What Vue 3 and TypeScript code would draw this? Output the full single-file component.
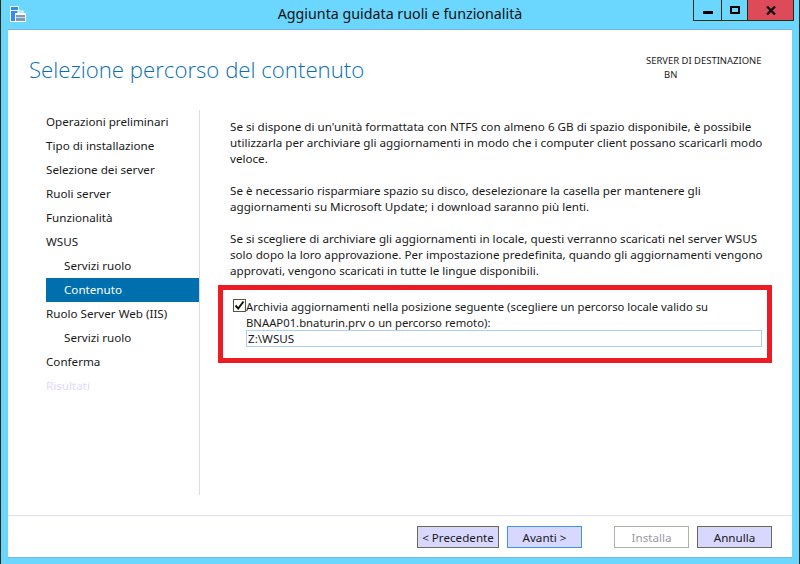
<script setup lang="ts">
interface NavItem { label: string; sub?: boolean; active?: boolean; disabled?: boolean }
const items: NavItem[] = [
  { label: 'Operazioni preliminari' },
  { label: 'Tipo di installazione' },
  { label: 'Selezione dei server' },
  { label: 'Ruoli server' },
  { label: 'Funzionalità' },
  { label: 'WSUS' },
  { label: 'Servizi ruolo', sub: true },
  { label: 'Contenuto', sub: true, active: true },
  { label: 'Ruolo Server Web (IIS)' },
  { label: 'Servizi ruolo', sub: true },
  { label: 'Conferma' },
  { label: 'Risultati', disabled: true },
]
</script>

<template>
  <div class="win">
    <header class="titlebar">
      <svg class="appicon" width="16" height="16" viewBox="0 0 16 16">
        <rect x="0" y="0" width="9" height="16" fill="#fff" />
        <rect x="1" y="1" width="7" height="3" fill="#2e8bff" />
        <rect x="1" y="5" width="7" height="10" fill="#2e8bff" />
        <rect x="5" y="7" width="11" height="9" fill="#fff" />
        <rect x="6" y="9" width="9" height="6" fill="#7d9bb5" />
        <rect x="6" y="11" width="9" height="1" fill="#fff" opacity="0.6" />
        <rect x="8" y="5" width="5" height="2" fill="#6bd7ff" stroke="#fff" stroke-width="1" />
      </svg>
      <div class="title">Aggiunta guidata ruoli e funzionalità</div>
      <div class="controls">
        <div class="ctl min"><span></span></div>
        <div class="ctl max"><span></span></div>
        <div class="ctl close">
          <svg width="10" height="9" viewBox="0 0 10 9"><path d="M1 0.5 L9 8.5 M9 0.5 L1 8.5" stroke="#111" stroke-width="2.4" fill="none" /></svg>
        </div>
      </div>
    </header>
    <div class="client">
      <div class="head">
        <h1>Selezione percorso del contenuto</h1>
        <div class="dest">
          <div>SERVER DI DESTINAZIONE</div>
          <div class="bn">BN</div>
        </div>
      </div>
      <div class="main">
        <nav class="nav">
          <div
            v-for="(it, i) in items"
            :key="i"
            class="item"
            :class="{ sub: it.sub, active: it.active, disabled: it.disabled }"
          >{{ it.label }}</div>
        </nav>
        <section class="content">
          <p>Se si dispone di un'unità formattata con NTFS con almeno 6 GB di spazio disponibile, è possibile utilizzarla per archiviare gli aggiornamenti in modo che i computer client possano scaricarli modo veloce.</p>
          <p>Se è necessario risparmiare spazio su disco, deselezionare la casella per mantenere gli aggiornamenti su Microsoft Update; i download saranno più lenti.</p>
          <p>Se si scegliere di archiviare gli aggiornamenti in locale, questi verranno scaricati nel server WSUS solo dopo la loro approvazione. Per impostazione predefinita, quando gli aggiornamenti vengono approvati, vengono scaricati in tutte le lingue disponibili.</p>
          <div class="redbox">
            <div class="check">
              <span class="cb">
                <svg width="11" height="11" viewBox="0 0 11 11"><path d="M1.5 5.5 L4.2 8.5 L9.5 1.5" stroke="#111" stroke-width="1.9" fill="none" /></svg>
              </span>
              <span class="cbtext">Archivia aggiornamenti nella posizione seguente (scegliere un percorso locale valido su BNAAP01.bnaturin.prv o un percorso remoto):</span>
            </div>
            <div class="input">Z:\WSUS</div>
          </div>
        </section>
      </div>
      <footer class="footer">
        <div class="btn b1">&lt; Precedente</div>
        <div class="btn b2 focus">Avanti &gt;</div>
        <div class="btn b3 off">Installa</div>
        <div class="btn b4">Annulla</div>
      </footer>
    </div>
  </div>
</template>

<style>
html, body { margin: 0; padding: 0; background: #6bd7ff; }
</style>

<style scoped>
.win {
  width: 800px;
  height: 564px;
  box-sizing: border-box;
  background: #6bd7ff;
  border-left: 1px solid #2b2b1a;
  border-right: 1px solid #2b2b1a;
  display: flex;
  flex-direction: column;
  font-family: "Noto Sans", "Open Sans", sans-serif;
  font-size: 11.65px;
  line-height: 16px;
  color: #1a1a1a;
  overflow: hidden;
}
.titlebar {
  height: 29px;
  flex: none;
  display: flex;
  align-items: flex-start;
  position: relative;
}
.appicon { margin: 6px 0 0 9px; flex: none; }
.title {
  position: absolute;
  left: 0;
  right: 0;
  top: 4px;
  text-align: center;
  font-size: 14.25px;
  line-height: 20px;
  color: #111;
}
.controls {
  position: absolute;
  top: 0;
  left: 692px;
  display: flex;
  height: 21px;
  border: 1px solid #2b2b10;
  border-top: 0;
  box-sizing: border-box;
}
.ctl {
  display: flex;
  align-items: center;
  justify-content: center;
  box-sizing: border-box;
}
.min { width: 28px; border-right: 1px solid #2b2b10; }
.min span { width: 10px; height: 3px; background: #000; margin-top: 5px; }
.max { width: 26px; border-right: 1px solid #2b2b10; }
.max span { width: 10px; height: 8px; box-sizing: border-box; border: 2px solid #000; margin-top: -1px; }
.close { width: 45px; background: #dd4b5a; }
.client {
  flex: 1;
  margin: 0 7px 6px 7px;
  background: #fff;
  border-top: 1px solid #7ab4f0;
  border-bottom: 1px solid #7ab4f0;
  display: flex;
  flex-direction: column;
  min-height: 0;
}
.head {
  height: 80px;
  flex: none;
  position: relative;
}
h1 {
  margin: 0;
  position: absolute;
  left: 21px;
  top: 25px;
  font-family: "Open Sans", "Noto Sans", sans-serif;
  font-weight: 300;
  font-size: 22.2px;
  line-height: 30px;
  color: #0a6fb0;
}
.dest {
  position: absolute;
  left: 638px;
  top: 24px;
  font-size: 9.45px;
  line-height: 14px;
  color: #1a1a1a;
}
.bn { margin-left: 18px; }
.main {
  flex: 1;
  display: flex;
  min-height: 0;
}
.nav {
  width: 153px;
  margin-left: 38px;
  height: 385px;
  border-right: 1px solid #d8d8ff;
  flex: none;
}
.item {
  height: 24px;
  line-height: 24px;
  box-sizing: border-box;
  white-space: nowrap;
}
.sub { padding-left: 18px; }
.active { background: #006fae; color: #fff; }
.disabled { color: #e4d8ff; }
.content {
  flex: 1;
  padding: 9px 20px 0 30px;
  min-width: 0;
}
p { margin: 0 0 16px; }
.redbox {
  width: 554px;
  height: 78px;
  box-sizing: border-box;
  margin-left: -12px;
  margin-top: -10px;
  border: 5px solid #ed1c24;
  padding: 9px 5px 0 10px;
}
.check { display: flex; align-items: flex-start; }
.cb {
  width: 13px;
  height: 13px;
  box-sizing: border-box;
  border: 1px solid #55553f;
  flex: none;
  display: flex;
  align-items: center;
  justify-content: center;
}
.cbtext { flex: 1; padding-right: 5px; font-size: 11.3px; }
.input {
  margin: -1px 0 0 13px;
  height: 17px;
  box-sizing: border-box;
  border: 1px solid #a8d0f8;
  line-height: 15px;
  padding-left: 1px;
}
.footer {
  height: 42px;
  flex: none;
  border-top: 1px solid #dcdcf8;
  display: flex;
  align-items: flex-start;
  padding: 10px 0 0 409px;
  box-sizing: border-box;
}
.btn {
  height: 22px;
  box-sizing: border-box;
  border: 1px solid #6b6b55;
  background: #d8d8ff;
  text-align: center;
  line-height: 21px;
}
.b1 { width: 82px; }
.b2 { width: 75px; margin-left: 8px; }
.b3 { width: 75px; margin-left: 32px; }
.b4 { width: 75px; margin-left: 8px; }
.focus { border-color: #3c96f0; }
.off { background: #fff; border-color: #b0b0a8; color: #9a9aa8; }
</style>
